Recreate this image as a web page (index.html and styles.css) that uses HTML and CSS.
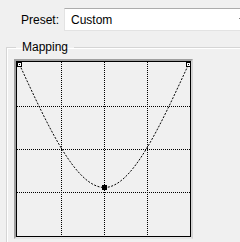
FILE: index.html
```html
<!DOCTYPE html>
<html lang="en">

<head>
    <meta charset="UTF-8">
    <title>Curves</title>
    <link rel="stylesheet" href="styles.css">
</head>

<body>
    <div class="preset">
        <span class="label">Preset:</span>
        <div class="select">
            <span class="value">Custom</span>
            <span class="arrow"></span>
        </div>
    </div>
    <fieldset class="group">
        <legend>Mapping</legend>
        <div class="graph">
            <div class="plot">
                <svg width="173" height="174" viewBox="17 62 173 174">
                    <g class="grid">
                        <line x1="61.5" y1="62" x2="61.5" y2="236" />
                        <line x1="104.5" y1="62" x2="104.5" y2="236" />
                        <line x1="147.5" y1="62" x2="147.5" y2="236" />
                        <line x1="17" y1="106.5" x2="190" y2="106.5" />
                        <line x1="17" y1="149.5" x2="190" y2="149.5" />
                        <line x1="17" y1="192.5" x2="190" y2="192.5" />
                    </g>
                    <path class="curve" d="M19.5,64.5 C47.7,125.75 75.8,187.5 104.5,187.5 C132.2,187.5 160.3,125.75 188.5,64.5" />
                    <rect class="handle" x="17.5" y="62.5" width="4" height="4" />
                    <rect class="handle" x="186.5" y="62.5" width="4" height="4" />
                    <rect class="dot" x="19" y="64" width="1" height="1" />
                    <rect class="dot" x="188" y="64" width="1" height="1" />
                    <rect class="dot" x="102" y="185" width="5" height="5" />
                </svg>
            </div>
        </div>
    </fieldset>
</body>

</html>
```

FILE: styles.css
```css
* {
    margin: 0;
    padding: 0;
    box-sizing: border-box;
}

body {
    background-color: #f0f0f0;
    font-family: "Liberation Sans", Arial, sans-serif;
    font-size: 12px;
    color: #000;
    overflow: hidden;
    width: 240px;
    height: 242px;
}

.preset {
    display: flex;
    align-items: center;
    gap: 5px;
    padding: 8px 0 0 21px;
}

.select {
    display: flex;
    align-items: center;
    flex: 1;
    height: 23px;
    overflow: hidden;
    background-color: #ffffff;
    border: 1px solid #e3e3e3;
    border-top-color: #acacac;
    border-right: none;
    padding-left: 6px;
}

.arrow {
    margin-left: auto;
    margin-right: -7px;
    width: 0;
    height: 0;
    border-left: 4px solid transparent;
    border-right: 4px solid transparent;
    border-top: 4px solid #000;
}

.group {
    margin: 9px 0 0 6px;
    height: 202px;
    border: 1px solid #d5d5d5;
    border-right: none;
    border-bottom: none;
    box-shadow: inset 1px 1px #ffffff;
    padding: 4px 0 0 7px;
}

.group legend {
    margin-left: 2px;
    padding: 0 6px;
    line-height: 15px;
}

.graph {
    width: 179px;
    height: 180px;
    border-style: solid;
    border-width: 2px;
    border-color: #a0a0a0 #d4d4d4 #e6e6e6 #a0a0a0;
}

.plot {
    width: 175px;
    height: 176px;
    border: 1px solid #000;
}

.plot svg {
    display: block;
}

.grid line {
    stroke: #000;
    stroke-width: 1;
    stroke-dasharray: 1 1;
    shape-rendering: crispEdges;
}

.curve {
    fill: none;
    stroke: #000;
    stroke-width: 1;
    stroke-dasharray: 2 1.5;
}

.handle {
    fill: #ffffff;
    stroke: #000;
    stroke-width: 1;
}

.dot {
    fill: #000;
}
```
